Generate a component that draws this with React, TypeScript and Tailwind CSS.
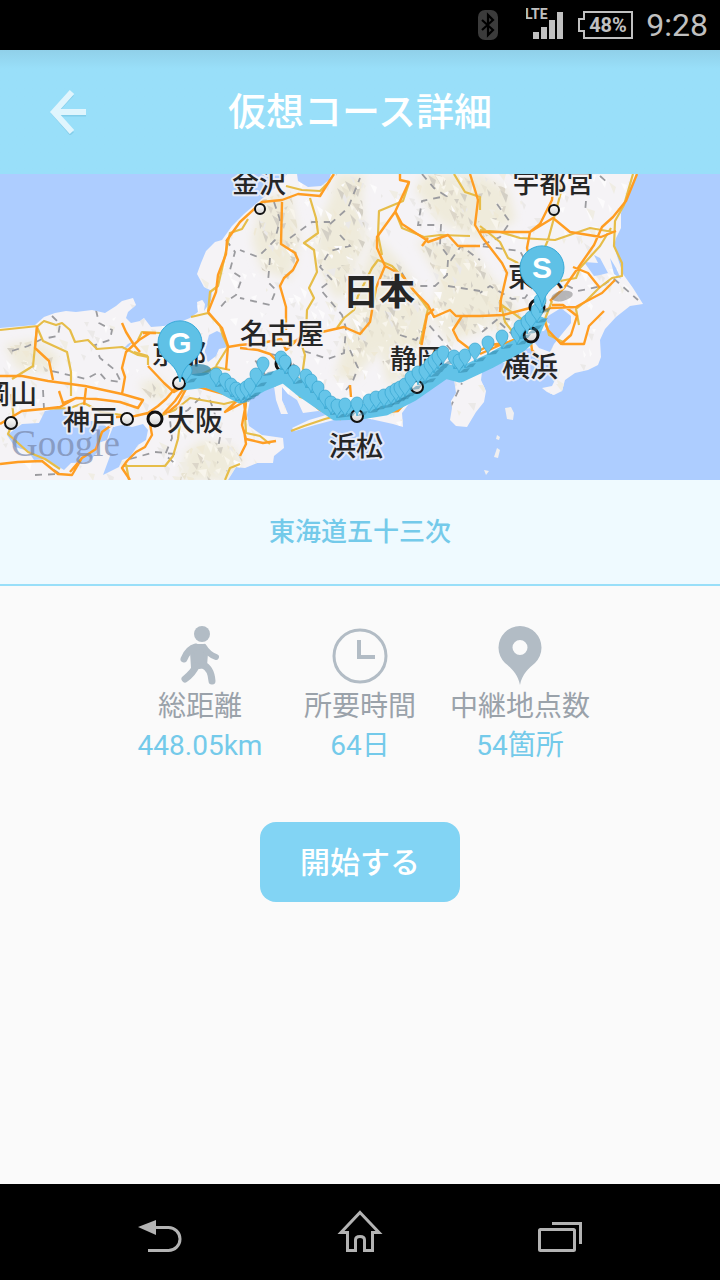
const JP = "font-['Roboto','Noto_Sans_CJK_JP',sans-serif]";

const LAND =
  'M0 328L35 325L44 317L55 313L66 311L76 312L92 310L105 313L116 306L122 301L133 298L136 305L128 312L126 318L131 323L140 321L144 318L151 327L164 326L180 322L190 318L198 312L197 302L202 300L205 304L204 311L211 301L212 291L204 287L197 274L201 263L206 251L213 244L215 242L222 240L232 226L244 214L258 202L275 188L282 180L287 174L636 174L632 187L625 200L621 213L621 228L616 238L614 246L618 259L623 274L633 288L643 304L630 306L616 317L605 329L600 340L601 357L598 365L588 370L575 373L565 380L562 391L554 395L547 392L542 388L552 386L556 378L556 368L548 358L537 357L530 348L519 351L505 357L492 365L482 372L481 380L486 391L484 402L476 412L467 427L456 426L450 420L452 408L451 401L456 393L454 379L448 369L439 373L428 383L414 397L402 413L403 427L393 424L366 418L345 417L315 425L295 431L292 428L309 420L333 413L318 411L303 413L297 400L288 394L282 387L282 400L288 414L281 414L276 400L274 386L267 377L257 386L250 400L247 415L249 426L262 435L283 438L284 448L274 456L273 463L257 463L245 468L236 467L228 480L0 480Z';
const SEA = [
  'M297 174L298 181L308 187L321 186L329 180L331 174Z',
  'M548 316L561 308L571 316L571 323L562 334L554 344L550 352L539 348L531 338L535 332L544 331L550 324L545 321Z',
  'M7 435L22 424L39 423L45 411L61 408L74 413L85 421L100 421L110 430L107 440L98 443L97 453L88 462L71 463L64 470L46 459L34 460L28 451L15 447Z',
  'M113 427L122 425L132 427L143 424L148 430L146 440L138 445L130 457L122 460L119 467L103 475L110 456L107 442Z',
  'M209 335L217 331L225 335L228 347L219 349L216 356L208 362L204 354Z',
  'M584 262L598 263L594 255L600 258L608 273L600 275L594 276Z',
  'M610 258L616 268L621 279L614 274Z',
  'M122 350L128 344L135 340L128 347Z',
];
const ISLES = [
  'M505 408L511 407L514 413L513 420L507 419Z',
  'M497 435L500 437L499 440L496 439Z',
  'M497 448L500 450L498 458L494 457Z',
  'M484 470L489 471L486 475Z',
];
const HILLS = [
  'M336 174L364 174L362 200L366 240L356 262L350 290L338 300L330 290L318 262L314 232L330 200Z',
  'M262 200L290 190L300 240L290 280L262 270L252 240Z',
  'M376 236L400 262L420 290L430 330L412 372L388 386L380 350L352 380L335 376L348 330L355 290Z',
  'M425 174L480 174L508 190L516 220L480 240L440 222L415 190Z',
  'M416 240L470 246L500 290L486 330L448 342L430 312L440 280Z',
  'M202 440L232 446L244 462L224 480L180 480L186 452Z',
  'M4 345L34 340L60 356L52 372L18 370Z',
  'M138 384L160 378L170 394L154 402Z',
  'M480 290L500 284L520 316L496 332Z',
];
const ORANGE = [
  'M0 376L22 376L48 381L85 386L122 394L143 400L138 408L120 402L96 399L76 398L60 407L43 409L22 411L0 424',
  'M37 326L35 348L49 361L53 380', 'M59 391L63 403L76 398', 'M86 388L84 405',
  'M122 323L126 332L134 345L140 352M150 333L139 340L126 352L122 368L125 377L122 394',
  'M143 333L156 333M148 366L164 383L174 392L188 384L206 389L224 394L240 402',
  'M116 417L135 416L148 413L158 406L166 399L178 385', 'M163 414L175 401L184 388M166 414L178 404L187 387',
  'M148 413L152 435L145 447L136 452L127 461L122 468L130 480',
  'M0 464L18 462L42 461L58 474L72 475L82 458L96 449L102 432L113 424M82 458L70 472',
  'M208 312L216 292L218 275L226 254L227 240L240 222L262 202L282 200L298 194L320 196L330 180L334 174',
  'M208 312L222 328L228 346L226 370', 'M228 347L240 345L262 343L281 339L286 350L305 333L322 332L344 327L360 334L370 322L376 288L385 266L377 248L377 237L395 212L409 182L400 180L400 174',
  'M282 202L281 244L295 253L298 260L293 270L284 278L280 286L286 307L286 330',
  'M240 348L258 350L270 354L286 370L302 381L308 387L305 397L320 410L340 419L372 413L398 411L405 403L425 385',
  'M395 211L402 224L425 239L428 242L448 235L458 246L480 246M428 238L422 246',
  'M385 266L402 275L414 291L428 305L434 317L450 310L456 316L480 316L503 315L530 308L543 304',
  'M434 309L427 315L421 348', 'M462 316L453 330L458 340L475 353L490 345L512 342L528 329L538 313L550 308',
  'M470 174L475 190L478 200L475 225L482 237L502 263L507 273L501 299L500 312',
  'M554 174L552 200L540 224L530 232L527 248L531 264L538 276L545 304',
  'M480 232L530 232L553 218L570 232L601 237L616 231M637 174L626 201L613 217L602 227L594 245L578 268L564 288L550 301',
  'M573 267L588 273L600 288M550 308L576 307L585 302L602 293L615 280',
  'M552 305L563 305L577 316L571 335L561 344L548 330L545 323M562 344L584 344L589 326L604 311',
  'M529 328L532 350L540 359M480 354L500 345L514 340', 'M241 397L225 412L244 402L246 420M246 403L242 425L246 439L263 443L276 441',
  'M240 456L246 444L244 430M350 385L351 397',
];
const GOLD = [
  'M0 330L38 326L44 321L56 325L62 323L70 330L75 342L88 340L97 349L122 347L138 355L148 357L148 365',
  'M37 327L43 341L67 352L71 372L71 396', 'M37 327L33 366L12 379', 'M11 394L14 420L8 434L28 452L45 459L60 469',
  'M43 409L70 408L84 403L101 412L122 415', 'M191 317L208 313L220 326L223 336L228 347L216 366',
  'M138 340L142 332L160 333M134 352L148 356', 'M208 312L210 292L218 286L224 260L230 233L242 229L248 219',
  'M286 186L302 190L320 191L330 181M310 198L316 218L318 233L304 243L314 250L317 272L309 288L314 298L307 310L306 333',
  'M337 328L344 318L354 310L358 296L372 268L378 260L392 266L404 278L423 302L428 309L420 344',
  'M280 343L300 340L305 355L303 369L320 393L343 414L325 419L304 426L291 431',
  'M289 381L300 397L315 401L320 409', 'M250 382L246 399L245 416L246 433L260 436L270 444',
  'M395 211L402 228L424 237L440 235L470 236M382 255L378 235L379 211L403 201L409 183',
  'M454 174L465 192L480 197L480 210M480 226L500 242L508 258L520 264', 'M480 230L500 232L520 238L555 240L590 228L613 232M532 174L560 176L561 192L554 218L548 240L536 268',
  'M633 174L624 205L615 221L614 246L622 263L622 276L612 278L599 288L586 301L576 309L579 325',
  'M560 281L576 278L580 268L600 246L611 228', 'M552 301L545 319L549 335L563 342M500 300L505 322L512 331',
  'M500 304L516 315L531 326', 'M183 386L190 380L216 367L230 370M155 418L175 410L190 398L224 404L240 400',
  'M180 422L178 439L173 456L165 466L124 466M129 480L126 464', 'M225 480L230 468L240 464',
];
const BORDERS = [
  'M52 316L60 324L58 336L42 339L28 346L8 352M96 310L99 323L112 330L110 340L95 345L100 358L115 370L121 382L106 380L99 372L86 379L52 371',
  'M43 390L44 409L50 414', 'M226 240L235 252L230 270L242 278L236 295L225 302L218 310',
  'M274 202L280 220L275 240L258 257L240 250M270 258L268 282L276 290L270 305L240 298M290 238L312 222L330 222M330 224L348 208L360 178',
  'M340 235L350 246L330 251L320 267L332 280L320 289L342 315L346 328L344 353L328 359L304 351M350 350L358 368L352 383L346 390',
  'M422 174L434 188L446 196L422 201L418 225L441 225L440 245L451 260L461 246L480 260M448 260L447 275L435 286L410 286L400 270M448 286L480 291',
  'M400 335L416 340L428 324L451 350', 'M497 204L510 222L500 237L480 246L520 251L527 264',
  'M587 188L585 213M600 176L608 183M553 264L562 283L578 291L602 286L613 278L638 300M535 284L525 298L512 299L490 286L480 293M482 332L499 318L515 320',
  'M500 323L512 334L521 322', 'M270 354L286 357L301 372M276 386L266 376L255 360M205 346L190 348L188 370M200 398L188 410L170 420L172 438L165 455L178 466',
  'M130 459L155 452L175 454M35 475L60 474L54 470M210 400L221 432L218 448M450 408L462 383',
];

const CITIES: { x: number; y: number; r: number; w: number }[] = [
  { x: 260, y: 209, r: 5, w: 2 },
  { x: 554, y: 210, r: 5, w: 2 },
  { x: 11, y: 423, r: 6, w: 2 },
  { x: 127, y: 419, r: 6, w: 2 },
  { x: 155, y: 419, r: 7, w: 3 },
  { x: 283, y: 364, r: 7, w: 3 },
  { x: 537, y: 307, r: 7, w: 3 },
];
const ROUTE_CITIES: { x: number; y: number; r: number; w: number }[] = [
  { x: 357, y: 416, r: 6, w: 2 },
  { x: 417, y: 387, r: 6, w: 2 },
  { x: 179, y: 383, r: 6, w: 2 },
  { x: 531, y: 335, r: 7, w: 3 },
];
const LABELS: { x: number; y: number; t: string; s: number; bold?: boolean }[] = [
  { x: 259, y: 193, t: '金沢', s: 27 },
  { x: 553, y: 193, t: '宇都宮', s: 27 },
  { x: 379, y: 305, t: '日本', s: 36, bold: true },
  { x: 282, y: 344, t: '名古屋', s: 28 },
  { x: 417, y: 369, t: '静岡', s: 27 },
  { x: 530, y: 377, t: '横浜', s: 28 },
  { x: 356, y: 456, t: '浜松', s: 27 },
  { x: 90, y: 430, t: '神戸', s: 27 },
  { x: 195, y: 431, t: '大阪', s: 28 },
  { x: 10, y: 404, t: '岡山', s: 27 },
  { x: 179, y: 364, t: '京都', s: 27 },
  { x: 536, y: 287, t: '東京', s: 28 },
];
const STOPS: [number, number][] = [
  [186, 370], [216, 374], [225, 379], [231, 384], [236, 388], [241, 390], [246, 387], [250, 384], [256, 374], [263, 363],
  [281, 357], [285, 361], [294, 371], [306, 375], [311, 380], [318, 387], [325, 396], [331, 402], [337, 405], [345, 404],
  [357, 403], [369, 400], [376, 397], [384, 395], [391, 392], [396, 389], [400, 387], [405, 384], [411, 377], [418, 372],
  [425, 370], [430, 364], [434, 360], [438, 356], [443, 352], [454, 356], [459, 360], [465, 355], [475, 349], [488, 342],
  [502, 336], [517, 332], [520, 326], [527, 321], [531, 317], [537, 310], [540, 300],
];

function relief(count: number, tones: string[], start: number) {
  let seed = start;
  const next = () => (seed = (seed * 16807) % 2147483647) / 2147483647;
  next();
  next();
  return Array.from({ length: count }, (_, i) => {
    const x = Math.round(next() * 720);
    const y = Math.round(174 + next() * 306);
    const a = Math.round(next() * 7 + 2);
    const b = Math.round(next() * 8 - 2);
    return <path key={i} d={`M${x} ${y}l${a} ${b}l-2 ${a}z`} fill={tones[i % tones.length]} />;
  });
}

function BigPin({ x, y, letter }: { x: number; y: number; letter: string }) {
  return (
    <g transform={`translate(${x} ${y})`}>
      <path d="M0 39C-3 25 -8 22 -16 15A22 22 0 1 1 16 15C8 22 3 25 0 39Z" fill="#5fc1e6" stroke="#35a9d8" />
      <text y="10" textAnchor="middle" className="fill-white font-['Liberation_Sans',sans-serif] text-[30px] font-bold">
        {letter}
      </text>
    </g>
  );
}

function Dot({ x, y, r, w }: { x: number; y: number; r: number; w: number }) {
  return <circle cx={x} cy={y} r={r} fill="url(#dot)" stroke="#111" strokeWidth={w} />;
}

function CourseMap() {
  return (
    <svg viewBox="0 174 720 306" className="block h-auto w-full" role="img" aria-label="東海道五十三次">
      <defs>
        <clipPath id="land"><path d={LAND} /></clipPath>
        <clipPath id="hills"><path d={HILLS.join('')} /></clipPath>
        <filter id="soft"><feGaussianBlur stdDeviation="5" /></filter>
        <linearGradient id="dot" x1="0" y1="0" x2="0" y2="1">
          <stop offset="0" stopColor="#fff" />
          <stop offset="1" stopColor="#d4d4d4" />
        </linearGradient>
      </defs>
      <rect y="174" width="720" height="306" fill="#adcdff" />
      <path d={LAND} fill="#f5f3f6" />
      <g clipPath="url(#land)">
        <path d={HILLS.join('')} fill="#efebdb" filter="url(#soft)" />
        {relief(900, ['#ebe9e8', '#f0ede4', '#fcfbfc'], 91)}
        <g clipPath="url(#hills)">{relief(2600, ['#dcd6c9', '#d3cfc5', '#e8e3d2', '#f8f5ec', '#efe9d6'], 7)}</g>
        <path d={BORDERS.join('')} fill="none" stroke="#9b9b9f" strokeWidth="1.8" strokeDasharray="7 6" />
      </g>
      <path d={SEA.join('')} fill="#adcdff" />
      <path d={ISLES.join('')} fill="#f0eff0" />
      <path d={GOLD.join('')} fill="none" stroke="#e6bd49" strokeWidth="2.2" strokeLinejoin="round" />
      <path d={ORANGE.join('')} fill="none" stroke="#ff9d22" strokeWidth="2.4" strokeLinejoin="round" />
      {CITIES.map((c) => <Dot key={`${c.x}-${c.y}`} {...c} />)}
      {LABELS.map((l) => (
        <text
          key={l.t}
          x={l.x}
          y={l.y}
          fontSize={l.s}
          fontWeight={l.bold ? 700 : 500}
          textAnchor="middle"
          fill="#262626"
          stroke="#f5f3f6"
          strokeOpacity="0.8"
          strokeWidth="4"
          strokeLinejoin="round"
          paintOrder="stroke"
          className="font-['Noto_Sans_CJK_JP',sans-serif]"
        >
          {l.t}
        </text>
      ))}
      <text x="11" y="456" className="fill-[#7886a8]/70 font-['Liberation_Serif',serif] text-[37px]">Google</text>
      <path
        d="M182 383L206 380L222 386L241 396L262 384L284 375L300 388L336 413L360 412L385 408L412 394L445 371L460 375L490 361L520 345L532 334L540 316"
        fill="none" stroke="#62c3e8" strokeWidth="15" strokeLinejoin="round"
      />
      {ROUTE_CITIES.map((c) => <Dot key={`${c.x}-${c.y}`} {...c} />)}
      <ellipse cx="199" cy="370" rx="12" ry="6" fill="#2f86a8" fillOpacity="0.75" />
      <ellipse cx="562" cy="296" rx="11" ry="5" fill="#777" fillOpacity="0.5" transform="rotate(-12 562 296)" />
      {STOPS.map(([x, y]) => (
        <g key={`${x}-${y}`}>
          <path d={`M${x} ${y + 13}l5 -4l6 -1l-3 4z`} fill="#28799b" fillOpacity="0.45" />
          <path
            d={`M${x} ${y + 13}C${x - 1} ${y + 7} ${x - 6} ${y + 6} ${x - 6} ${y}A6 6 0 1 1 ${x + 6} ${y}C${x + 6} ${y + 6} ${x + 1} ${y + 7} ${x} ${y + 13}Z`}
            fill="#66c5e9" stroke="#35a5d0" strokeWidth="0.7"
          />
        </g>
      ))}
      <BigPin x={180} y={343} letter="G" />
      <BigPin x={542} y={268} letter="S" />
    </svg>
  );
}

function StatusBar() {
  return (
    <div className="flex h-[50px] items-center justify-end bg-black pr-3 text-[#c0c0c0]">
      <svg width="20" height="30" viewBox="0 0 20 30" className="mr-7">
        <rect width="20" height="30" rx="7" fill="#3b3b3b" />
        <path d="M4 10L15 20L10 25V5L15 10L4 20" fill="none" stroke="#000" strokeWidth="2.2" />
      </svg>
      <svg width="40" height="34" viewBox="0 0 40 34" className="mr-3">
        <text x="-1" y="11" fill="currentColor" className="font-['Roboto',sans-serif] text-[14px] font-bold">LTE</text>
        <path d="M7 24h6v7h-6zM15 19h6v12h-6zM23 12h6v19h-6zM31 4h6v27h-6z" fill="currentColor" />
      </svg>
      <svg width="56" height="28" viewBox="0 0 56 28" className="mr-3">
        <path d="M6 1H54V27H6V20H1V8H6Z" fill="none" stroke="currentColor" strokeWidth="2" />
        <text x="30" y="21" textAnchor="middle" fill="currentColor" className="font-['Roboto',sans-serif] text-[20px] font-bold">48%</text>
      </svg>
      <time className="font-['Roboto',sans-serif] text-[32px] leading-none">9:28</time>
    </div>
  );
}

const WalkIcon = (
  <svg width="60" height="60" viewBox="0 0 60 60" fill="#b2bcc5" stroke="#b2bcc5" strokeLinecap="round" strokeLinejoin="round">
    <circle cx="32" cy="8" r="8" stroke="none" />
    <path d="M25 20H34L36 27L35 40L23 42L22 26Z" strokeWidth="4" />
    <path d="M26 21Q18 23 14 33" fill="none" strokeWidth="7" />
    <path d="M34 21Q38 28 46 31" fill="none" strokeWidth="6" />
    <path d="M26 40Q23 47 15 53" fill="none" strokeWidth="7" />
    <path d="M33 39Q41 42 42 55" fill="none" strokeWidth="7" />
  </svg>
);
const ClockIcon = (
  <svg width="60" height="60" viewBox="0 0 60 60" fill="none" stroke="#b2bcc5">
    <circle cx="30" cy="30" r="26" strokeWidth="3" />
    <path d="M29 14V31H45" strokeWidth="4" />
  </svg>
);
const PinIcon = (
  <svg width="60" height="60" viewBox="0 0 60 60" fill="#b2bcc5">
    <path
      fillRule="evenodd"
      d="M30 59C28 48 21 42 15 37A21.500 21.500 0 1 1 45 37C39 42 32 48 30 59ZM30 14A7.500 7.500 0 1 0 30 29A7.500 7.500 0 1 0 30 14Z"
    />
  </svg>
);
const STATS = [
  { icon: WalkIcon, label: '総距離', value: '448.05km' },
  { icon: ClockIcon, label: '所要時間', value: '64日' },
  { icon: PinIcon, label: '中継地点数', value: '54箇所' },
];

export default function App() {
  return (
    <div className={`flex min-h-screen flex-col bg-[#fafafa] ${JP}`}>
      <StatusBar />
      <header className="grid h-[124px] grid-cols-[1fr_auto_1fr] items-center bg-linear-to-b from-[#90d0e9] via-[#99dff9] via-15% to-[#99dff9]">
        <button type="button" aria-label="戻る" className="ml-12 w-10">
          <svg width="40" height="46" viewBox="0 0 40 46" fill="none">
            <path d="M24 5L6 24L24 45M8 25H38" stroke="#83cdea" strokeWidth="5" />
            <path d="M24 3L6 23L24 43M8 23H38" stroke="#e0f5fd" strokeWidth="6" />
          </svg>
        </button>
        <h1 className="text-[38px] leading-none font-medium text-white">仮想コース詳細</h1>
      </header>
      <CourseMap />
      <h2 className="flex h-[106px] items-center justify-center border-b-2 border-[#99dff9] bg-[#effaff] text-[26px] font-medium text-[#74caea]">
        東海道五十三次
      </h2>
      <main className="flex flex-1 flex-col items-center pt-10">
        <dl className="grid grid-cols-3">
          {STATS.map((s) => (
            <div key={s.label} className="flex w-40 flex-col items-center">
              {s.icon}
              <dt className="text-[28px] leading-[42px] whitespace-nowrap text-[#9aa2aa]">{s.label}</dt>
              <dd className="text-[28px] leading-9 text-[#74caea]">{s.value}</dd>
            </div>
          ))}
        </dl>
        <button type="button" className="mt-[58px] h-20 w-[200px] rounded-2xl bg-[#82d4f4] text-[30px] font-medium text-white">
          開始する
        </button>
      </main>
      <nav className="grid h-24 grid-cols-[1fr_200px_200px_200px_1fr] items-center bg-black text-[#b3b3b3]">
        <button type="button" aria-label="戻る" className="col-start-2 flex h-full items-center justify-center">
          <svg width="48" height="48" viewBox="0 0 48 48" fill="none" stroke="currentColor" strokeWidth="3">
            <path d="M2 19L20 12V27Z" fill="currentColor" stroke="none" />
            <path d="M18 19.500H32.500A11.500 11.500 0 0 1 32.500 42.500H12" />
          </svg>
        </button>
        <button type="button" aria-label="ホーム" className="flex h-full items-center justify-center">
          <svg width="48" height="48" viewBox="0 0 48 48" fill="none" stroke="currentColor" strokeWidth="3">
            <path d="M24 4.500L43 24.500H36.500V42.500H28.500V32Q28.500 28.500 24 28.500T19.500 32V42.500H11.500V24.500H5Z" />
          </svg>
        </button>
        <button type="button" aria-label="最近使ったアプリ" className="flex h-full items-center justify-center">
          <svg width="48" height="48" viewBox="0 0 48 48" fill="none" stroke="currentColor" strokeWidth="3">
            <rect x="3.500" y="21.500" width="35" height="21" rx="1" />
            <path d="M16 15.500H44.500V36" />
          </svg>
        </button>
      </nav>
    </div>
  );
}
